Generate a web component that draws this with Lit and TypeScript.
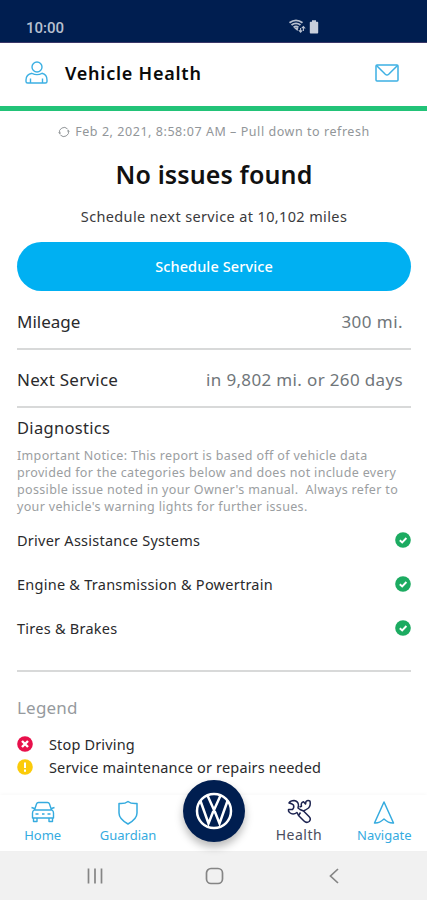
import { LitElement, html, css } from "lit";
import { customElement } from "lit/decorators.js";

const systems = ["Driver Assistance Systems", "Engine & Transmission & Powertrain", "Tires & Brakes"];

const checkIcon = html`<svg class="dot" viewBox="0 0 16 16">
  <circle cx="8" cy="8" r="7.8" fill="#1cab61" />
  <path d="M4.8 8.2 L7.2 10.4 L11.4 6" fill="none" stroke="#fff" stroke-width="1.9" />
</svg>`;

@customElement("app-root")
export class AppRoot extends LitElement {
  static styles = css`
    :host {
      display: flex;
      flex-direction: column;
      width: 427px;
      height: 900px;
      overflow: hidden;
      background: #fff;
      color: #2a2a2c;
      font-family: "Noto Sans", "Open Sans", sans-serif;
      white-space: nowrap;
    }
    * { box-sizing: border-box; }
    svg { display: block; flex: none; overflow: visible; }
    .status {
      flex: none; height: 43px; background: #001e50; display: flex; align-items: flex-start;
      color: #b9c1d0; padding: 19px 0 0 26px; border-bottom: 1px solid #3b3768;
    }
    .clock { font: 500 15px/18px Roboto, sans-serif; width: 263px; letter-spacing: 0; }
    .header {
      flex: none; height: 68px; border-bottom: 5px solid #22c378; display: flex; align-items: center;
      padding: 0 28px 4px 25px;
    }
    .heading { flex: 1; margin-left: 17px; font-size: 18px; font-weight: 600; color: #0a0a0a; letter-spacing: 0.76px; }
    .body { flex: none; height: 684px; padding: 0 16px 0 17px; display: flex; flex-direction: column; }
    .refresh {
      height: 41px; display: flex; align-items: center; justify-content: center; gap: 5px;
      font-size: 12.5px; color: #929699; letter-spacing: 0.55px;
    }
    .title { height: 44px; line-height: 44px; text-align: center; font-size: 25px; font-weight: 600; color: #111; letter-spacing: 0.12px; }
    .sub { height: 46px; line-height: 41px; text-align: center; font-size: 14.5px; color: #3a3a3c; letter-spacing: 0.37px; }
    .button {
      height: 49px; border-radius: 25px; background: #00b0f2; color: #fff; border: 0;
      font: 500 14.5px/49px "Noto Sans", sans-serif; letter-spacing: 0.1px; text-align: center; padding: 0;
    }
    .row {
      height: 58px; flex: none; border-bottom: 2px solid #d8d9d9; display: flex; align-items: center;
      justify-content: space-between; padding: 2px 8px 0 0; font-size: 17px;
      letter-spacing: 0.22px;
    }
    .row.first { height: 59px; padding-top: 4px; }
    .row .value { color: #70767a; letter-spacing: 0.35px; }
    .row.first .value { letter-spacing: 0.45px; }
    .row.first .name { letter-spacing: 0; }
    .diag { height: 39px; line-height: 39px; font-size: 16.5px; letter-spacing: 0.3px; }
    .notice { height: 71px; font-size: 12.5px; line-height: 17px; color: #9b9ea1; letter-spacing: 0.34px; white-space: pre; }
    .system { height: 44px; display: flex; align-items: center; justify-content: space-between; font-size: 14.5px; letter-spacing: 0.25px; }
    .dot { width: 16px; height: 16px; }
    .rule { height: 22px; border-bottom: 2px solid #d8d9d9; }
    .legend { height: 60px; line-height: 72px; font-size: 17px; color: #969a9e; letter-spacing: 0.2px; }
    .key { height: 23px; display: flex; align-items: center; gap: 16px; font-size: 14.5px; letter-spacing: 0.16px; }
    .tabs {
      position: relative; flex: none; height: 56px; display: flex; background: #fff;
      box-shadow: 0 -1px 4px rgba(0, 0, 0, 0.03); color: #35abdf;
    }
    .tab { width: 85.4px; display: flex; flex-direction: column; align-items: center; padding-top: 4px; font-size: 13px; line-height: 18px; gap: 1px; }
    .tab.dark { color: #4a4d5e; font-size: 14px; letter-spacing: 0.5px; }
    .tab.dark svg { color: #1c2350; }
    .fab {
      position: absolute; left: 183px; top: -15px; width: 62px; height: 62px; border-radius: 50%;
      background: #001e50; box-shadow: 0 5px 9px rgba(0, 0, 0, 0.28);
      display: flex; align-items: center; justify-content: center;
    }
    .keys { flex: none; height: 49px; background: #f1f1f1; display: flex; align-items: center; color: #858585; padding: 1px 0 0 87px; }
  `;

  render() {
    return html`
      <div class="status">
        <div class="clock">10:00</div>
        <svg width="30" height="16" viewBox="0 0 30 16" fill="none" stroke="#b9c1d0">
          <path d="M0.5 3.8 Q7 -1.2 13.5 3.8 M2.5 6 Q7 2.7 11.5 6 M4.6 8.3 Q7 6.6 9.4 8.3" stroke-width="1.8" />
          <path d="M4.5 8.4 L9.5 8.4 L8.5 12Z" fill="#b9c1d0" stroke="none" />
          <path d="M11.6 13.2V9 M9.8 11.2 L11.6 13.2 L13.2 11.4 M14.4 7.5V12 M12.8 9.2 L14.4 7.5 L16.2 9.5" stroke-width="1.1" />
          <path d="M23 1.2h4v1.6h1.4q.8 0 .8.8v10q0 .9-.8.9h-6.8q-.8 0-.8-.9v-10q0-.8.8-.8H23z" fill="#c9cfdb" stroke="none" />
        </svg>
      </div>
      <div class="header">
        <svg width="23" height="23" viewBox="0 0 23 23" fill="none" stroke="#3db0e3" stroke-width="1.4" stroke-linejoin="round">
          <circle cx="12" cy="6" r="5" />
          <path d="M7 12.3 Q1 13.5 1 19 V20.5 Q1 22 2.6 22 H20.4 Q22 22 22 20.5 V19 Q22 13.5 17 12.3 Q12 15 7 12.3 M5.5 17.5V22 M17.5 17.5V22" />
        </svg>
        <div class="heading">Vehicle Health</div>
        <svg width="24" height="18" viewBox="0 0 24 18" fill="none" stroke="#3db0e3" stroke-width="1.5" stroke-linejoin="round">
          <rect x="1" y="1" width="22" height="16" rx="1" />
          <path d="M1.5 1.5 L10.3 10.3 Q12 11.8 13.7 10.3 L22.5 1.5" />
        </svg>
      </div>
      <div class="body">
        <div class="refresh">
          <svg width="12" height="12" viewBox="0 0 12 12" fill="none" stroke="#929699">
            <path d="M1.6 7.5 A4.7 4.7 0 0 1 9.6 3 M10.4 4.5 A4.7 4.7 0 0 1 2.4 9" />
            <path d="M.6 6.4 L1.7 7.8 L3 6.6 M9 5.4 L10.3 4.200 L11.4 5.600" stroke-width=".9" />
          </svg>
          <span>Feb 2, 2021, 8:58:07 AM – Pull down to refresh</span>
        </div>
        <div class="title">No issues found</div>
        <div class="sub">Schedule next service at 10,102 miles</div>
        <button class="button">Schedule Service</button>
        <div class="row first"><span class="name">Mileage</span><span class="value">300 mi.</span></div>
        <div class="row"><span class="name">Next Service</span><span class="value">in 9,802 mi. or 260 days</span></div>
        <div class="diag">Diagnostics</div>
        <div class="notice">${"Important Notice: This report is based off of vehicle data\nprovided for the categories below and does not include every\npossible issue noted in your Owner's manual.  Always refer to\nyour vehicle's warning lights for further issues."}</div>
        ${systems.map((name) => html`<div class="system"><span>${name}</span>${checkIcon}</div>`)}
        <div class="rule"></div>
        <div class="legend">Legend</div>
        <div class="key">
          <svg class="dot" viewBox="0 0 16 16"><circle cx="8" cy="8" r="7.8" fill="#e8104b" />
            <path d="M5 5 L11 11 M11 5 L5 11" stroke="#fff" stroke-width="2.4" /></svg>
          <span>Stop Driving</span>
        </div>
        <div class="key">
          <svg class="dot" viewBox="0 0 16 16"><circle cx="8" cy="8" r="7.8" fill="#fbcb0a" />
            <path d="M8 3.5V9 M8 10.5V12.7" stroke="#fff" stroke-width="2" /></svg>
          <span>Service maintenance or repairs needed</span>
        </div>
      </div>
      <div class="tabs">
        <div class="tab">
          <svg width="26" height="26" viewBox="0 0 26 26" fill="none" stroke="currentColor" stroke-width="1.4" stroke-linejoin="round">
            <path d="M4.5 11 L6.5 5 Q7 3.5 8.5 3.5 H17.5 Q19 3.5 19.5 5 L21.5 11 M4 11 H22 Q23.5 12 23.5 14 V19 H2.5 V14 Q2.5 12 4 11Z M3.5 19V22.5H7V19 M19 19V22.5H22.5V19 M5.5 15H8.5 M12 15H14.5 M17.5 15H20.5 M1.5 8.5L4.5 9.5 M24.5 8.5L21.5 9.5" />
          </svg>
          <span>Home</span>
        </div>
        <div class="tab">
          <svg width="26" height="26" viewBox="0 0 26 26" fill="none" stroke="currentColor" stroke-width="1.5" stroke-linejoin="round">
            <path d="M13 2.5 Q10 5 4 4.5 V14 Q4 20 13 25 Q22 20 22 14 V4.5 Q16 5 13 2.5Z" />
          </svg>
          <span>Guardian</span>
        </div>
        <div class="tab"></div>
        <div class="tab dark">
          <svg width="26" height="26" viewBox="0 0 26 26" fill="none" stroke="currentColor" stroke-width="1.5" stroke-linejoin="round">
            <path d="M3 4 Q4.500 1.500 8 1.500 Q12 2 12.500 6 L12 9 L14 10.500 L17.500 12 L23 17.500 Q25.500 20 23.200 22.500 Q20.500 24.500 18 22 L12.500 16.500 L11 13.500 Q7 16.500 3.500 13.500 Q2 12 2.500 10.500 L6.500 10.500 Q8.500 8.500 7.500 6 Q6 4.500 3 4Z" />
            <path d="M13.500 8 L15.500 7.200 Q14.500 3.500 17.500 2.800 L19.500 5 L20 2.500 Q22 0.800 24 2.200 Q25 6.500 22.500 9 Q20.500 10.500 17.500 12 M12.500 16.500 L14.500 13.500" />
          </svg>
          <span>Health</span>
        </div>
        <div class="tab">
          <svg width="26" height="26" viewBox="0 0 26 26" fill="none" stroke="currentColor" stroke-width="1.500" stroke-linejoin="round">
            <path d="M13 3 L22.500 24 Q18 24.500 13 20 Q8 24.500 3.500 24Z" />
          </svg>
          <span>Navigate</span>
        </div>
        <div class="fab">
          <svg width="38" height="38" viewBox="0 0 38 38" fill="none" stroke="#fff" stroke-width="2.500">
            <circle cx="19" cy="19" r="17" />
            <path d="M12.500 3.500 L19 18 L25.500 3.500 M5.500 9 L13.500 31.500 L18 20 H20 L24.500 31.500 L32.500 9" />
          </svg>
        </div>
      </div>
      <div class="keys">
        <svg width="250" height="20" viewBox="0 0 250 20" fill="none" stroke="currentColor" stroke-width="1.700">
          <path d="M1.500 2.500V17.500 M8 2.500V17.500 M14.500 2.500V17.500" />
          <rect x="119.500" y="2.500" width="16" height="15" rx="4.500" />
          <path d="M251 3 L243.500 10 L251 17" />
        </svg>
      </div>
    `;
  }
}
